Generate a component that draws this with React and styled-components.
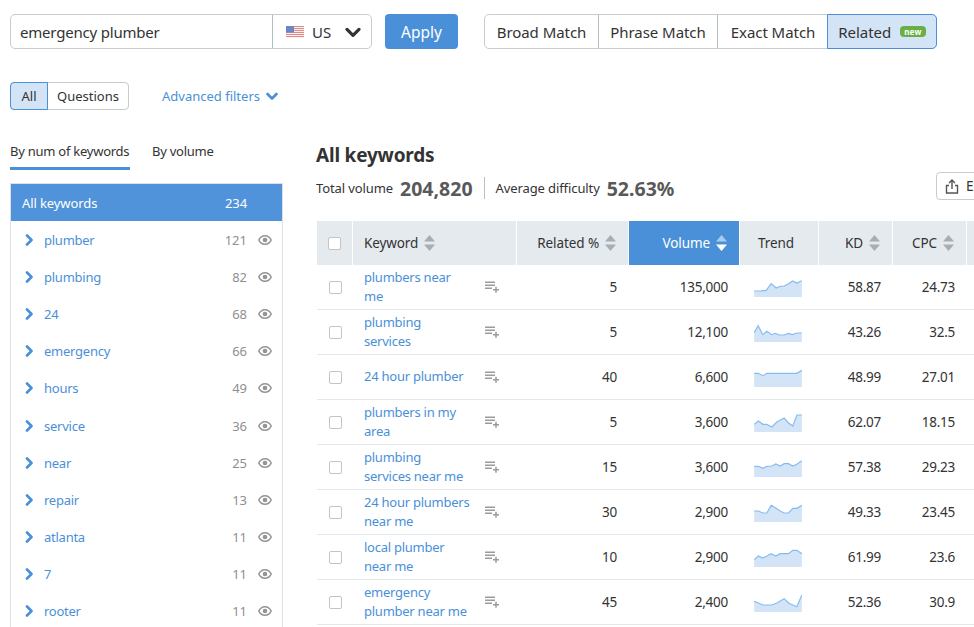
import React from 'react';
import styled, { createGlobalStyle } from 'styled-components';

const Global = createGlobalStyle`
  html, body {
    margin: 0;
    height: 100%;
    overflow: hidden;
    background: #fff;
  }
  body {
    font-family: "Noto Sans", "Open Sans", sans-serif;
    color: #333;
  }
  * { box-sizing: border-box; }
`;

const blue = '#4a90d9';
const COLS = '36px 164px 112px 111px 79px 74px 74px 74px';

const Page = styled.div`
  width: 1100px;
  height: 627px;
  overflow: hidden;
  padding: 14px 0 0 10px;
`;
const TopBar = styled.div`
  display: flex;
  align-items: stretch;
  height: 35px;
`;
const SearchBox = styled.div`
  display: flex;
  width: 362px;
  border: 1px solid #c5ccd3;
  border-radius: 5px;
`;
const SearchText = styled.div`
  flex: 1;
  display: flex;
  align-items: center;
  padding-left: 9px;
  font-size: 15px;
  letter-spacing: -0.2px;
`;
const CountrySelect = styled.div`
  width: 99px;
  border-left: 1px solid #b4bcc4;
  display: flex;
  align-items: center;
  padding-left: 13px;
  font-size: 15px;
`;
const CountryName = styled.span`
  margin: 0 14px 0 8px;
`;
const ApplyButton = styled.div`
  width: 73px;
  margin-left: 13px;
  background: ${blue};
  color: #fff;
  border-radius: 4px;
  font-size: 15.5px;
  display: flex;
  align-items: center;
  justify-content: center;
`;
const MatchGroup = styled.div`
  display: flex;
  margin-left: 26px;
  border: 1px solid #c5ccd3;
  border-radius: 5px;
`;
const MatchTab = styled.div`
  width: ${p => p.$w}px;
  display: flex;
  align-items: center;
  justify-content: center;
  gap: 9px;
  font-size: 15px;
  letter-spacing: -0.05px;
  border-left: 1px solid ${p => (p.$active ? blue : p.$first ? 'transparent' : '#b4bcc4')};
  ${p => p.$first && 'border-left: 0;'}
  ${p => p.$active && `
    background: #d3e4f6;
    margin: -1px;
    border: 1px solid ${blue};
    border-radius: 0 5px 5px 0;
  `}
`;
const NewBadge = styled.span`
  background: #6aaf45;
  color: #fff;
  font-size: 8px;
  font-weight: 700;
  line-height: 11px;
  padding: 0 4px;
  border-radius: 4px;
  text-transform: lowercase;
  letter-spacing: 0.3px;
`;
const FilterRow = styled.div`
  display: flex;
  align-items: center;
  margin-top: 33px;
  height: 28px;
`;
const ToggleGroup = styled.div`
  display: flex;
  height: 100%;
  border: 1px solid #c5ccd3;
  border-radius: 4px;
`;
const Toggle = styled.div`
  display: flex;
  align-items: center;
  justify-content: center;
  width: ${p => p.$w}px;
  font-size: 13px;
  ${p => p.$active && `
    background: #d3e4f6;
    margin: -1px 0 -1px -1px;
    border: 1px solid ${blue};
    border-radius: 4px 0 0 4px;
  `}
`;
const AdvancedLink = styled.div`
  display: flex;
  align-items: center;
  gap: 6px;
  margin-left: 33px;
  color: ${blue};
  font-size: 13px;
`;
const Columns = styled.div`
  display: flex;
  margin-top: 30px;
`;
const Sidebar = styled.aside`
  width: 273px;
  flex: none;
`;
const SideTabs = styled.div`
  display: flex;
  gap: 22px;
  height: 30px;
`;
const SideTab = styled.div`
  width: ${p => p.$w}px;
  font-size: 13px;
  letter-spacing: -0.25px;
  white-space: nowrap;
  height: 30px;
  padding-top: 1px;
  line-height: 20px;
  border-bottom: 3px solid ${p => (p.$active ? blue : 'transparent')};
`;
const SideList = styled.div`
  margin-top: 13px;
  border: 1px solid #dde1e5;
  border-bottom: 0;
`;
const SideHead = styled.div`
  height: 37px;
  background: #5093da;
  color: #fff;
  font-size: 13px;
  letter-spacing: -0.1px;
  display: flex;
  align-items: center;
  justify-content: space-between;
  padding: 0 35px 0 11px;
`;
const SideRow = styled.div`
  height: 37.2px;
  display: flex;
  align-items: center;
  padding: 0 10px 0 12px;
  font-size: 13px;
`;
const SideLabel = styled.span`
  flex: 1;
  color: ${blue};
  margin-left: 9px;
  letter-spacing: -0.25px;
`;
const SideCount = styled.span`
  color: #8f8f8f;
  margin-right: 11px;
`;
const Main = styled.main`
  margin-left: 33px;
  flex: 1;
`;
const SummaryRow = styled.div`
  display: flex;
  align-items: flex-start;
  height: 81px;
`;
const SummaryText = styled.div`
  width: 620px;
  padding-top: 2px;
`;
const Title = styled.h1`
  margin: 0 0 8px;
  font-size: 19px;
  letter-spacing: -0.2px;
  line-height: 26px;
  font-weight: 700;
  color: #333;
`;
const Stats = styled.div`
  display: flex;
  align-items: center;
  height: 24px;
  font-size: 13px;
  letter-spacing: -0.1px;
`;
const StatValue = styled.b`
  font-size: 19.5px;
  letter-spacing: 0;
  color: #595959;
  margin-left: 7px;
`;
const StatDivider = styled.span`
  width: 1px;
  height: 22px;
  background: #b9bfc5;
  margin: 0 11px;
`;
const ExportButton = styled.div`
  display: flex;
  align-items: center;
  width: 80px;
  height: 28px;
  margin-top: 32px;
  padding-left: 8px;
  gap: 7px;
  font-size: 13.5px;
  border: 1px solid #c5ccd3;
  border-radius: 4px;
`;
const Table = styled.div`
  margin-left: 1px;
`;
const HeadRow = styled.div`
  display: grid;
  grid-template-columns: ${COLS};
  height: 44px;
`;
const HeadCell = styled.div`
  display: flex;
  align-items: center;
  justify-content: ${p => p.$align || 'flex-end'};
  gap: 6px;
  padding: 0 ${p => p.$pad ?? 12}px;
  font-size: 13.5px;
  letter-spacing: -0.1px;
  background: ${p => (p.$active ? blue : '#e4eaee')};
  color: ${p => (p.$active ? '#fff' : '#333')};
  border-right: 1px solid #fff;
`;
const Row = styled.div`
  display: grid;
  grid-template-columns: ${COLS};
  height: 45px;
  border-bottom: 1px solid #e2e7ea;
  font-size: 13px;
`;
const CheckCell = styled.div`
  display: flex;
  align-items: center;
  justify-content: center;
`;
const Checkbox = styled.span`
  width: 13px;
  height: 13px;
  background: #fff;
  border: 1px solid #c4c4c4;
  border-radius: 2px;
`;
const KeywordCell = styled.div`
  display: flex;
  align-items: center;
  justify-content: space-between;
  padding: 0 18px 0 11px;
`;
const KeywordLink = styled.div`
  color: ${blue};
  line-height: 19.5px;
  letter-spacing: -0.25px;
  white-space: nowrap;
`;
const Line = styled.div``;
const NumCell = styled.div`
  display: flex;
  align-items: center;
  justify-content: flex-end;
  padding-right: 12px;
  font-size: 13.5px;
  letter-spacing: -0.25px;
`;
const TrendCell = styled.div`
  display: flex;
  align-items: center;
  padding-left: 14px;
`;

const Chevron = ({ dir = 'right', color = blue, size = 12, sw = 2.6 }) => (
  <svg width={size} height={size} viewBox="0 0 12 12" fill="none">
    <path
      d={dir === 'right' ? 'M4 1.5 8.5 6 4 10.5' : 'M1.5 4 6 8.5 10.5 4'}
      stroke={color}
      strokeWidth={sw}
      strokeLinecap="round"
      strokeLinejoin="round"
    />
  </svg>
);

const Eye = () => (
  <svg width="14" height="10" viewBox="0 0 14 10">
    <path
      fillRule="evenodd"
      fill="#949494"
      d="M7 0C3.800 0 1.200 2 0 5c1.200 3 3.800 5 7 5s5.800-2 7-5c-1.200-3-3.800-5-7-5Zm0 1.500c2.300 0 4.300 1.400 5.400 3.500C11.300 7.100 9.300 8.500 7 8.500S2.700 7.100 1.600 5C2.700 2.900 4.700 1.500 7 1.500Z"
    />
    <circle cx="7" cy="5" r="2.300" fill="#949494" />
  </svg>
);

const Sort = ({ active }) => (
  <svg width="11" height="18" viewBox="0 0 11 18">
    <path d="M5.500 1 11 7.500H0Z" fill={active ? '#a9cbee' : '#a9adb0'} />
    <path d="M5.500 17 0 10.500h11Z" fill={active ? '#fff' : '#a9adb0'} />
  </svg>
);

const AddList = () => (
  <svg width="14" height="12" viewBox="0 0 14 12" fill="#9b9b9b">
    <rect x="0" y="0.500" width="10" height="1.500" />
    <rect x="0" y="3.500" width="10" height="1.500" />
    <rect x="0" y="6.500" width="7" height="1.500" />
    <rect x="8" y="8" width="6" height="1.500" />
    <rect x="10.250" y="5.750" width="1.500" height="6" />
  </svg>
);

const Flag = () => (
  <svg width="18" height="12" viewBox="0 0 18 12">
    <rect width="18" height="12" fill="#f3f3f6" />
    {[0, 2, 4, 6, 8, 10].map(y => (
      <rect key={y} y={y} width="18" height="1" fill="#e58a84" />
    ))}
    <rect width="8" height="6.500" fill="#6f86c4" />
  </svg>
);

const ShareIcon = () => (
  <svg width="14" height="15" viewBox="0 0 14 15" fill="none" stroke="#555" strokeWidth="1.400">
    <path d="M7 10V1.500M4 4l3-3 3 3" />
    <path d="M4 6.500H1.500V14h11V6.500H10" />
  </svg>
);

const Spark = ({ points }) => {
  const pts = points.map(([x, y]) => `${x},${y}`).join(' ');
  return (
    <svg width="48" height="20" viewBox="0 0 143 60">
      <polygon points={`0,60 ${pts} 143,60`} fill="#d3e4f6" />
      <polyline points={pts} fill="none" stroke="#86bbf0" strokeWidth="3.500" />
    </svg>
  );
};

// x is measured from the left edge of the chart, y from a 60 unit tall box
const sparkFrom = (xs, ys, bottom) => xs.map((x, i) => [x - 42, ys[i] - (bottom - 60)]);

const rows = [
  {
    kw: ['plumbers near', 'me'], rel: 5, vol: '135,000', kd: '58.87', cpc: '24.73',
    spark: sparkFrom([42, 60, 78, 93, 108, 120, 132, 145, 157, 170, 185], [72, 72, 70, 50, 63, 58, 57, 50, 42, 48, 41], 90),
  },
  {
    kw: ['plumbing', 'services'], rel: 5, vol: '12,100', kd: '43.26', cpc: '32.5',
    spark: sparkFrom([42, 54, 68, 80, 95, 105, 118, 132, 145, 157, 170, 185], [197, 176, 203, 193, 203, 199, 204, 204, 199, 203, 198, 198], 225),
  },
  {
    kw: ['24 hour plumber'], rel: 40, vol: '6,600', kd: '48.99', cpc: '27.01',
    spark: sparkFrom([42, 55, 68, 80, 170, 185], [319, 319, 326, 319, 319, 310], 360),
  },
  {
    kw: ['plumbers in my', 'area'], rel: 5, vol: '3,600', kd: '62.07', cpc: '18.15',
    spark: sparkFrom([42, 55, 68, 80, 95, 110, 132, 145, 158, 170, 185], [472, 462, 472, 472, 480, 465, 453, 468, 477, 444, 444], 495),
  },
  {
    kw: ['plumbing', 'services near me'], rel: 15, vol: '3,600', kd: '57.38', cpc: '29.23',
    spark: sparkFrom([42, 55, 68, 80, 95, 107, 120, 132, 145, 158, 170, 185], [56, 56, 62, 56, 55, 49, 55, 48, 48, 55, 50, 39], 88),
  },
  {
    kw: ['24 hour plumbers', 'near me'], rel: 30, vol: '2,900', kd: '49.33', cpc: '23.45',
    spark: sparkFrom([42, 55, 68, 80, 93, 108, 120, 132, 145, 158, 170, 185], [190, 190, 196, 196, 173, 182, 190, 196, 196, 182, 182, 173], 223),
  },
  {
    kw: ['local plumber', 'near me'], rel: 10, vol: '2,900', kd: '61.99', cpc: '23.6',
    spark: sparkFrom([42, 55, 68, 80, 93, 107, 120, 145, 158, 170, 185], [336, 325, 331, 325, 318, 325, 318, 318, 308, 308, 318], 358),
  },
  {
    kw: ['emergency', 'plumber near me'], rel: 45, vol: '2,400', kd: '52.36', cpc: '30.9',
    spark: sparkFrom([42, 55, 68, 95, 110, 132, 145, 158, 170, 185], [460, 465, 471, 471, 465, 452, 465, 471, 476, 441], 492),
  },
];

const groups = [
  ['plumber', 121], ['plumbing', 82], ['24', 68], ['emergency', 66], ['hours', 49], ['service', 36],
  ['near', 25], ['repair', 13], ['atlanta', 11], ['7', 11], ['rooter', 11],
];

export default function App() {
  return (
    <Page>
      <Global />
      <TopBar>
        <SearchBox>
          <SearchText>emergency plumber</SearchText>
          <CountrySelect>
            <Flag />
            <CountryName>US</CountryName>
            <Chevron dir="down" color="#333" size={16} sw={2.4} />
          </CountrySelect>
        </SearchBox>
        <ApplyButton>Apply</ApplyButton>
        <MatchGroup>
          <MatchTab $first $w={113}>Broad Match</MatchTab>
          <MatchTab $w={119}>Phrase Match</MatchTab>
          <MatchTab $w={111}>Exact Match</MatchTab>
          <MatchTab $active $w={110}>Related <NewBadge>new</NewBadge></MatchTab>
        </MatchGroup>
      </TopBar>

      <FilterRow>
        <ToggleGroup>
          <Toggle $active $w={38}>All</Toggle>
          <Toggle $w={80}>Questions</Toggle>
        </ToggleGroup>
        <AdvancedLink>Advanced filters <Chevron dir="down" /></AdvancedLink>
      </FilterRow>

      <Columns>
        <Sidebar>
          <SideTabs>
            <SideTab $active $w={120}>By num of keywords</SideTab>
            <SideTab $w={70}>By volume</SideTab>
          </SideTabs>
          <SideList>
            <SideHead><span>All keywords</span><span>234</span></SideHead>
            {groups.map(([name, count]) => (
              <SideRow key={name}>
                <Chevron />
                <SideLabel>{name}</SideLabel>
                <SideCount>{count}</SideCount>
                <Eye />
              </SideRow>
            ))}
          </SideList>
        </Sidebar>

        <Main>
          <SummaryRow>
            <SummaryText>
              <Title>All keywords</Title>
              <Stats>
                Total volume <StatValue>204,820</StatValue>
                <StatDivider />
                Average difficulty <StatValue>52.63%</StatValue>
              </Stats>
            </SummaryText>
            <ExportButton><ShareIcon />Export</ExportButton>
          </SummaryRow>

          <Table>
            <HeadRow>
              <HeadCell $align="center" $pad={0}><Checkbox /></HeadCell>
              <HeadCell $align="flex-start" $pad={11}>Keyword <Sort /></HeadCell>
              <HeadCell>Related % <Sort /></HeadCell>
              <HeadCell $active>Volume <Sort active /></HeadCell>
              <HeadCell $align="flex-start" $pad={18}>Trend</HeadCell>
              <HeadCell>KD <Sort /></HeadCell>
              <HeadCell>CPC <Sort /></HeadCell>
              <HeadCell />
            </HeadRow>
            {rows.map(r => (
              <Row key={r.kw.join(' ')}>
                <CheckCell><Checkbox /></CheckCell>
                <KeywordCell>
                  <KeywordLink>
                    {r.kw.map(l => <Line key={l}>{l}</Line>)}
                  </KeywordLink>
                  <AddList />
                </KeywordCell>
                <NumCell>{r.rel}</NumCell>
                <NumCell>{r.vol}</NumCell>
                <TrendCell><Spark points={r.spark} /></TrendCell>
                <NumCell>{r.kd}</NumCell>
                <NumCell>{r.cpc}</NumCell>
                <NumCell />
              </Row>
            ))}
          </Table>
        </Main>
      </Columns>
    </Page>
  );
}
